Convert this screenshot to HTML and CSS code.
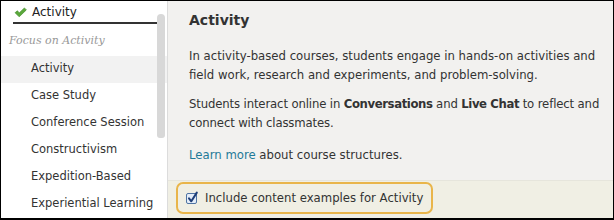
FILE: index.html
```html
<!DOCTYPE html>
<html>
<head>
<meta charset="utf-8">
<link rel="stylesheet" href="styles.css">
</head>
<body>
<div class="frame">
  <aside class="sidebar">
    <div class="selected-head">
      <svg class="check" width="13" height="11" viewBox="0 0 12 10"><path d="M1 5.2 L3.2 3.4 L4.8 5.4 L9.6 0.8 L11.4 2.6 L4.8 9 Z" fill="#5aa83a" stroke="#3d8a26" stroke-width="0.6" stroke-linejoin="round"/></svg>
      <span>Activity</span>
    </div>
    <div class="group">Focus on Activity</div>
    <ul class="list">
      <li class="active">Activity</li>
      <li>Case Study</li>
      <li>Conference Session</li>
      <li>Constructivism</li>
      <li>Expedition-Based</li>
      <li>Experiential Learning</li>
    </ul>
    <div class="scrollbar"></div>
  </aside>
  <main class="panel">
    <div class="content">
      <h1>Activity</h1>
      <p class="p1">In activity-based courses, students engage in hands-on activities and field work, research and experiments, and problem-solving.</p>
      <p class="p2">Students interact online in <b>Conversations</b> and <b>Live Chat</b> to reflect and connect with classmates.</p>
      <p class="p3"><a href="#">Learn more</a> about course structures.</p>
    </div>
    <div class="footer">
      <label class="include">
        <input type="checkbox" checked>
        <svg class="box" width="14" height="14" viewBox="0 0 14 14"><rect x="1.5" y="2.5" width="10" height="10" rx="1.5" fill="#e4edf8" stroke="#4f74a3"/><path d="M4 7.3 L6.3 10.3 L11.8 1.6" fill="none" stroke="#1f3f78" stroke-width="2" stroke-linecap="round" stroke-linejoin="round"/></svg>
        <span>Include content examples for Activity</span>
      </label>
    </div>
  </main>
</div>
</body>
</html>
```
FILE: styles.css
```css
html, body {
  margin: 0;
  padding: 0;
  background: #000;
}
.frame {
  box-sizing: border-box;
  width: 614px;
  height: 220px;
  border: 1px solid #000;
  border-bottom-width: 2px;
  display: flex;
  font-family: "DejaVu Sans", sans-serif;
  font-size: 11.7px;
  color: #333;
  overflow: hidden;
}
.sidebar {
  position: relative;
  width: 166px;
  background: #fff;
  border-right: 1px solid #dcdcdc;
  flex: none;
  font-size: 11.5px;
}
.selected-head {
  display: flex;
  align-items: center;
  gap: 5px;
  height: 23px;
  padding-top: 1px;
  box-sizing: border-box;
  margin: 0 7px 0 12px;
  padding-left: 1px;
  border-bottom: 2px solid #333;
  font-size: 12px;
  color: #222;
}
.check {
  display: block;
}
.group {
  font-family: "DejaVu Serif", serif;
  font-style: italic;
  font-size: 11px;
  color: #999;
  padding: 10px 0 0 8px;
  height: 22px;
}
.list {
  list-style: none;
  margin: 0;
  padding: 0;
}
.list li {
  height: 27px;
  line-height: 25px;
  padding-left: 30px;
}
.list li.active {
  background: #f2f2f2;
}
.scrollbar {
  position: absolute;
  left: 156px;
  top: 13px;
  width: 8px;
  height: 124px;
  background: #d8d8d8;
  border-radius: 4px 4px 3px 3px;
}
.panel {
  flex: 1;
  display: flex;
  flex-direction: column;
  background: #f2f1ef;
}
.content {
  flex: 1;
  padding: 9px 0 0 21px;
}
h1 {
  margin: 0 0 17px;
  font-size: 14px;
  font-weight: bold;
  color: #333;
  line-height: 20px;
}
p {
  margin: 0;
  line-height: 19px;
}
.p1 {
  margin-bottom: 10px;
}
.p2 {
  margin-bottom: 13px;
  letter-spacing: -0.14px;
}
.p2 b {
  letter-spacing: -0.4px;
}
a {
  color: #1f7a98;
  text-decoration: none;
}
.footer {
  height: 38px;
  background: #f0efe4;
  border-top: 1px solid #e6e5dc;
  padding: 1px 0 0 8px;
  box-sizing: border-box;
}
.include {
  display: inline-flex;
  align-items: center;
  gap: 6px;
  height: 28px;
  padding: 0 8px 0 7px;
  border: 2px solid #e9b54a;
  border-radius: 7px;
  color: #333;
}
.include input {
  display: none;
}
.box {
  display: block;
}
```
